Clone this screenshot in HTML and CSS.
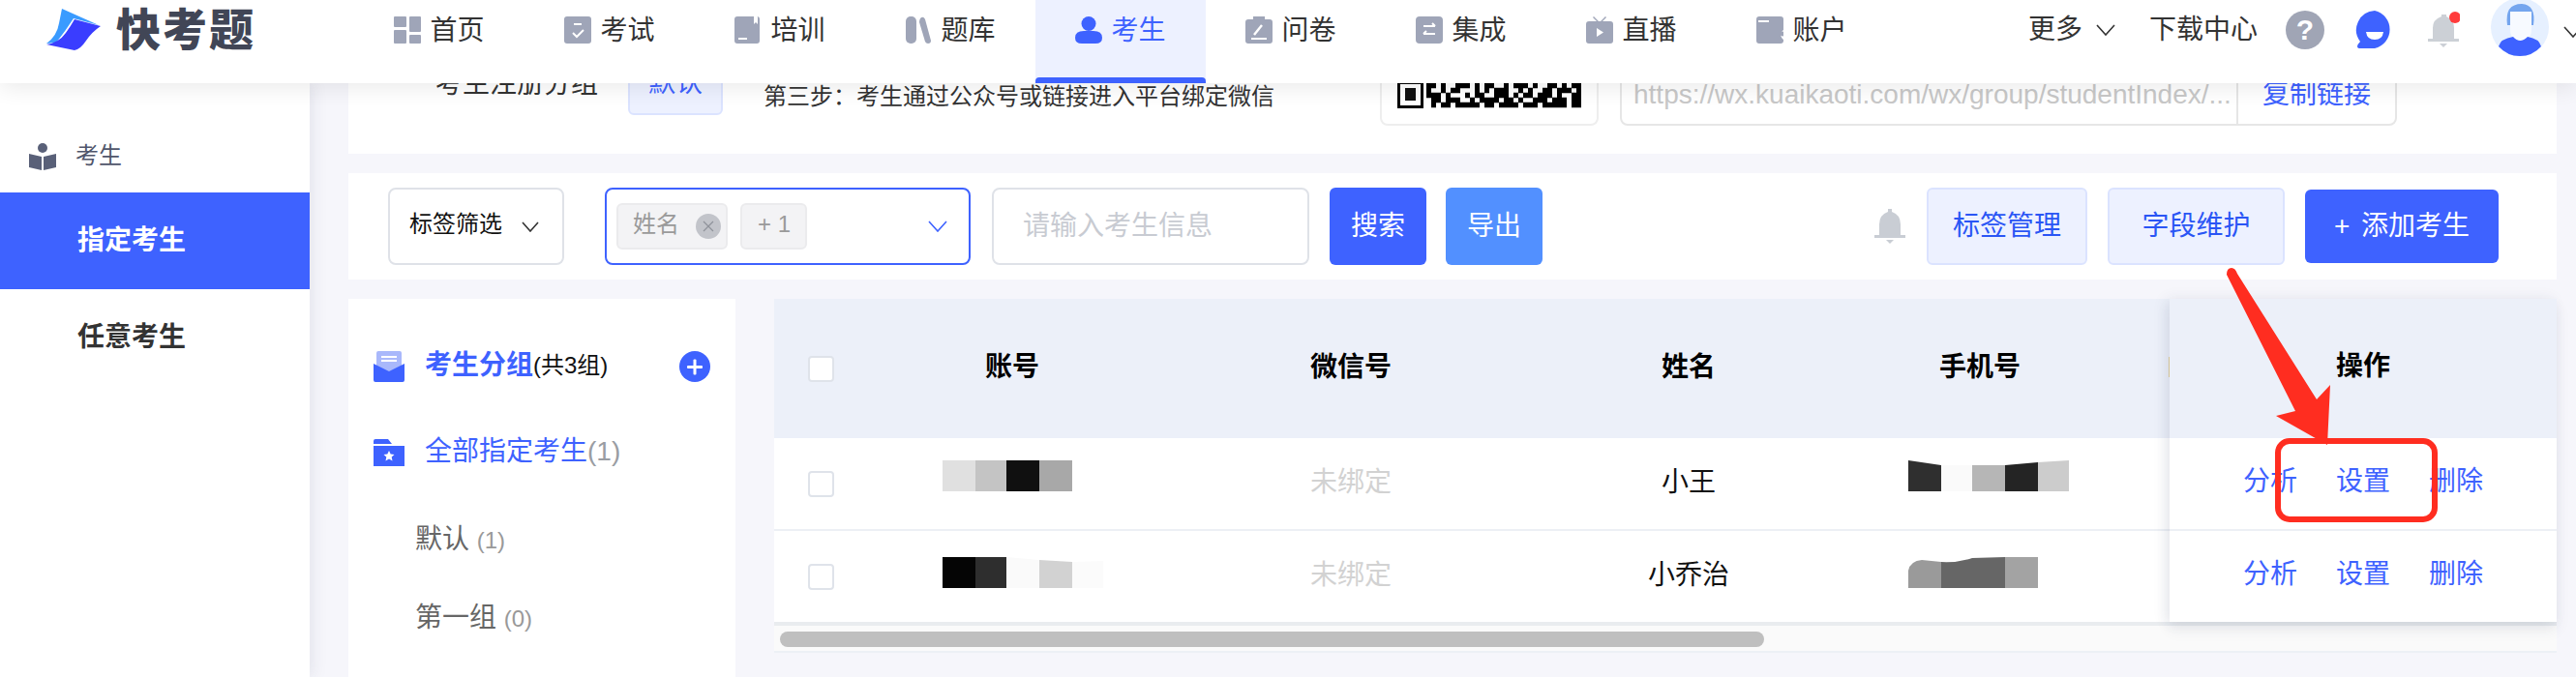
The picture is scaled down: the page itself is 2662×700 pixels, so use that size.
FILE: index.html
```html
<!DOCTYPE html>
<html lang="zh-CN">
<head>
<meta charset="utf-8">
<title>快考题 - 考生</title>
<link rel="stylesheet" href="styles.css">
</head>
<body>
<div class="stage">
  <header class="topbar">
    <div class="logo">
      <svg class="logo-mark" viewBox="0 0 58 44" width="58" height="44">
        <path fill="#3a9bff" d="M17 0 L55 17 L29 10 Q20 24 11 35 L1 36 Q12 28 14 15 Z"/>
        <path fill="#3a3dff" d="M30 11 L57 18 Q48 24 42 33 Q36 42 30 43 L1 37 Q14 35 21 25 Q26 18 30 11 Z"/>
      </svg>
      <span class="logo-text">快考题</span>
    </div>
    <nav class="nav">
      <a class="nav-item">
        <svg class="nav-icon" viewBox="0 0 28 28"><rect x="0" y="0" width="13" height="11" rx="1"/><rect x="0" y="14" width="13" height="14" rx="1"/><rect x="16" y="0" width="12" height="16" rx="1"/><rect x="16" y="19" width="12" height="9" rx="1"/></svg>
        <span>首页</span>
      </a>
      <a class="nav-item">
        <svg class="nav-icon" viewBox="0 0 28 28"><rect width="28" height="28" rx="3"/><path d="M10 8h8" stroke="#fff" stroke-width="2" fill="none"/><path d="M9 17l4 4 7-7" stroke="#fff" stroke-width="2" fill="none"/></svg>
        <span>考试</span>
      </a>
      <a class="nav-item">
        <svg class="nav-icon" viewBox="0 0 28 28"><path d="M3 0H20V8L22 6 24 8V0H23Q26 0 26 3V25Q26 28 23 28H3Q0 28 0 25V3Q0 0 3 0Z"/><path d="M4 23h9" stroke="#fff" stroke-width="2" fill="none"/></svg>
        <span>培训</span>
      </a>
      <a class="nav-item">
        <svg class="nav-icon" viewBox="0 0 28 28"><rect x="1" y="0" width="11" height="28" rx="5"/><path d="M16 2Q19-1 21 3L27 25Q27 28 24 28 22 28 21 26L15 6Q15 4 16 2Z"/></svg>
        <span>题库</span>
      </a>
      <a class="nav-item is-active">
        <svg class="nav-icon" viewBox="0 0 28 28"><ellipse cx="14" cy="7.5" rx="7.5" ry="7.5"/><path d="M7 28Q0 28 0 22 0 15 9 15H19Q28 15 28 22 28 28 21 28Z"/></svg>
        <span>考生</span>
      </a>
      <a class="nav-item">
        <svg class="nav-icon" viewBox="0 0 28 28"><path d="M3 3H8V0H20V3H25Q28 3 28 6V25Q28 28 25 28H3Q0 28 0 25V6Q0 3 3 3Z"/><path d="M17 9L9 19" stroke="#fff" stroke-width="2.4" fill="none"/><path d="M6 23h16" stroke="#fff" stroke-width="2" fill="none"/></svg>
        <span>问卷</span>
      </a>
      <a class="nav-item">
        <svg class="nav-icon" viewBox="0 0 28 28"><rect width="28" height="28" rx="4"/><path d="M8 10h12M17 7l3 3M20 18H8M11 15l-3 3" stroke="#fff" stroke-width="2" fill="none"/></svg>
        <span>集成</span>
      </a>
      <a class="nav-item">
        <svg class="nav-icon" viewBox="0 0 28 28"><path d="M8 0l5 5h2l5-5 1 1-4 4H25Q28 5 28 8V25Q28 28 25 28H3Q0 28 0 25V8Q0 5 3 5H11L7 1Z"/><path d="M11 12l7 4.5-7 4.5Z" fill="#fff"/></svg>
        <span>直播</span>
      </a>
      <a class="nav-item">
        <svg class="nav-icon" viewBox="0 0 28 28"><path d="M3 0H25Q28 0 28 3V14A6 6 0 0 0 28 24V25Q28 28 25 28H3Q0 28 0 25V3Q0 0 3 0Z"/><path d="M2 5H13" stroke="#fff" stroke-width="2" fill="none"/><circle cx="27" cy="18" r="2.4"/></svg>
        <span>账户</span>
      </a>
    </nav>
    <div class="top-right">
      <span class="top-link">更多</span>
      <svg class="chev chev-more" viewBox="0 0 20 12" width="20" height="12"><path d="M1 1l9 10 9-10"/></svg>
      <span class="top-link top-download">下载中心</span>
      <span class="help">?</span>
      <svg class="chat" viewBox="0 0 40 40" width="40" height="40"><path fill="#3e62ff" d="M20 0A20 20 0 0 1 20 39H5Q2 39 2 37 2 35 5 32A20 20 0 0 1 20 0Z"/><path fill="#fff" d="M11 22H29Q28 30 20 30 12 30 11 22Z"/></svg>
      <svg class="bell-top" viewBox="0 0 34 38" width="34" height="38"><path fill="#ccd0d6" d="M15 3h5v2q8 3 8 12V28h5v3H1V28H6V17Q6 8 15 5Z"/><path fill="#ccd0d6" d="M13 33H21L17 37Z"/><circle cx="29" cy="6" r="6" fill="#ff3b3b"/></svg>
      <svg class="avatar" viewBox="0 0 60 60" width="60" height="60"><circle cx="30" cy="30" r="30" fill="#e6f0ff"/><path fill="#74a5ee" d="M17 28Q14 6 32 6 47 7 44 28L42 28V18H20V28Z"/><path fill="#dbe4ee" d="M22 34H38V48H22Z"/><path fill="#f7faff" d="M20 14H42V32Q42 44 31 44 20 44 20 32Z"/><path fill="#3e62ff" d="M8 50Q10 42 23 40Q30 48 38 40 50 42 52 50 43 60 30 60 17 60 8 50Z"/></svg>
      <svg class="chev chev-user" viewBox="0 0 20 12" width="20" height="12"><path d="M1 1l9 10 9-10"/></svg>
    </div>
  </header>

  <div class="body">
    <aside class="sidebar">
      <div class="side-label">
        <svg viewBox="0 0 28 28" width="28" height="28"><circle cx="14" cy="5" r="5" fill="#596078"/><path fill="#596078" d="M0 11L13 14V28L0 25ZM28 11L15 14V28L28 25Z"/></svg>
        <span class="side-label-text">考生</span>
      </div>
      <a class="side-item is-active">指定考生</a>
      <a class="side-item">任意考生</a>
    </aside>

    <main class="main">
      <section class="card-top">
        <span class="reg-label">考生注册分组</span>
        <span class="reg-badge">默认</span>
        <span class="step-text">第三步：考生通过公众号或链接进入平台绑定微信</span>
        <div class="qr-box">
          <svg class="qr" viewBox="0 0 190 26" width="190" height="26">
            <rect x="0" y="-2" width="27" height="28" fill="#000"/><rect x="3" y="1" width="21" height="22" fill="#fff"/><rect x="8" y="5" width="11" height="13" fill="#111"/>
            <g stroke="#000" stroke-width="5.5" fill="none">
              <path d="M30 2.5H190" stroke-dasharray="10 5 5 10 15 5 5 5 10 10 5 5 15 5 5 10 10 5 5 5 15 5"/>
              <path d="M30 7.5H190" stroke-dasharray="5 10 5 5 10 15 5 5 5 5 15 10 5 5 5 10 10 5 15 5"/>
              <path d="M30 12.5H190" stroke-dasharray="15 5 5 15 5 5 10 10 15 5 5 5 10 5 15 5 5 10 10 5"/>
              <path d="M35 17.5H190" stroke-dasharray="10 5 15 10 5 5 20 5 10 5 5 10 15 5 15 5 10 5"/>
              <path d="M35 22.5H190" stroke-dasharray="5 5 10 5 25 5 10 5 20 5 15 5 25 5 15"/>
            </g>
          </svg>
        </div>
        <div class="link-box">
          <span class="link-url">https://wx.kuaikaoti.com/wx/group/studentIndex/...</span>
          <span class="link-copy">复制链接</span>
        </div>
      </section>

      <section class="card-filter">
        <div class="select-tag">
          <span class="raise">标签筛选</span>
          <svg class="chev" viewBox="0 0 18 11" width="18" height="11"><path d="M1 1l8 9 8-9"/></svg>
        </div>
        <div class="select-multi">
          <span class="chip"><span class="raise">姓名</span><i class="chip-x"><svg viewBox="0 0 12 12" width="12" height="12"><path d="M1 1l10 10M11 1L1 11"/></svg></i></span>
          <span class="chip chip-more"><span class="raise">+ 1</span></span>
          <svg class="chev chev-blue" viewBox="0 0 20 12" width="20" height="12"><path d="M1 1l9 10 9-10"/></svg>
        </div>
        <div class="search-input">请输入考生信息</div>
        <button class="btn btn-primary">搜索</button>
        <button class="btn btn-export">导出</button>
        <div class="filter-right">
          <svg viewBox="0 0 34 38" width="34" height="38"><path fill="#c9cdd4" d="M15 1h4v3q9 3 9 13V28h5v3H1V28H6V17Q6 7 15 4Z"/><path fill="#c9cdd4" d="M13 33H21L17 37Z"/></svg>
          <button class="btn btn-soft btn-tags">标签管理</button>
          <button class="btn btn-soft btn-fields">字段维护</button>
          <button class="btn btn-primary btn-add">+&nbsp;添加考生</button>
        </div>
      </section>

      <section class="content">
        <div class="groups">
          <div class="group-row">
            <svg viewBox="0 0 32 32" width="32" height="32"><rect x="3" y="0" width="26" height="22" rx="2" fill="#a9b8fb"/><path d="M8 6h16M8 10h16" stroke="#fff" stroke-width="2"/><path d="M0 13L16 21 32 13V30Q32 32 30 32H2Q0 32 0 30Z" fill="#3e62ff"/></svg>
            <span class="group-title">考生分组</span><span class="group-count">(共3组)</span>
            <span class="group-add"></span>
          </div>
          <div class="group-row group-all">
            <svg viewBox="0 0 32 28" width="32" height="28"><path fill="#3e62ff" d="M0 2Q0 0 2 0H15L19 5H0ZM0 7H32V28H0Z"/><path fill="#fff" d="M16 12l1.7 3.6 3.8.4-2.8 2.6.8 3.9-3.5-2-3.5 2 .8-3.9-2.8-2.6 3.8-.4Z"/></svg>
            <span class="group-link">全部指定考生<em>(1)</em></span>
          </div>
          <div class="group-sub group-sub-first">默认 <em>(1)</em></div>
          <div class="group-sub group-sub-second">第一组 <em>(0)</em></div>
        </div>

        <div class="table">
          <div class="table-main">
            <div class="table-cols">
              <div class="row row-head">
                <div class="cell cell-check"><i class="check"></i></div>
                <div class="cell">账号</div>
                <div class="cell">微信号</div>
                <div class="cell">姓名</div>
                <div class="cell">手机号</div>
                <div class="cell cell-clip">邮箱</div>
              </div>
              <div class="row">
                <div class="cell cell-check"><i class="check"></i></div>
                <div class="cell cell-mask mask-a">
                  <svg viewBox="0 0 134 32" width="134" height="32"><path fill="#e0e0e0" d="M0 0H34V32H0Z"/><path fill="#c4c4c4" d="M34 0H66V32H34Z"/><path fill="#101010" d="M66 0H100V32H66Z"/><path fill="#a8a8a8" d="M100 0H134V32H100Z"/></svg>
                </div>
                <div class="cell cell-muted">未绑定</div>
                <div class="cell">小王</div>
                <div class="cell cell-mask mask-a">
                  <svg viewBox="0 0 166 32" width="166" height="32"><path fill="#2f2f2f" d="M0 0L34 5V32H0Z"/><path fill="#fafafa" d="M34 5H66V32H34Z"/><path fill="#b6b6b6" d="M66 5H100V32H66Z"/><path fill="#242424" d="M100 5L134 2V32H100Z"/><path fill="#ccc" d="M134 2L166 0V32H134Z"/></svg>
                </div>
                <div class="cell"></div>
              </div>
              <div class="row">
                <div class="cell cell-check"><i class="check"></i></div>
                <div class="cell cell-mask mask-b">
                  <svg viewBox="0 0 166 32" width="166" height="32"><path fill="#050505" d="M0 0H34V32H0Z"/><path fill="#2e2e2e" d="M34 0H66V32H34Z"/><path fill="#fafafa" d="M66 0L100 3V32H66Z"/><path fill="#d2d2d2" d="M100 3L134 5V32H100Z"/><path fill="#fbfbfb" d="M134 5L166 4V32H134Z"/></svg>
                </div>
                <div class="cell cell-muted">未绑定</div>
                <div class="cell">小乔治</div>
                <div class="cell cell-mask mask-b">
                  <svg viewBox="0 0 134 32" width="134" height="32"><path fill="#9a9a9a" d="M0 32V14Q2 4 14 3L34 5V32Z"/><path fill="#666" d="M34 5Q50 6 66 1L100 0V32H34Z"/><path fill="#a3a3a3" d="M100 0H134V32H100Z"/></svg>
                </div>
                <div class="cell"></div>
              </div>
            </div>
            <div class="table-op">
              <div class="op-head">操作</div>
              <div class="op-row"><a>分析</a><a>设置</a><a>删除</a></div>
              <div class="op-row"><a>分析</a><a>设置</a><a>删除</a></div>
            </div>
          </div>
          <div class="scrollbar"><span class="scroll-thumb"></span></div>
        </div>
      </section>
    </main>
  </div>

  <svg class="annotation" viewBox="0 0 2662 700" width="2662" height="700">
    <rect x="2354" y="456" width="162" height="81" rx="12" fill="none" stroke="#ff2d20" stroke-width="6"/>
    <path fill="#ff2d20" d="M2301 284Q2301 277 2306 277 2310 277 2312 283L2394 413 2408 398 2405 460 2352 430 2372 425Z"/>
  </svg>
</div>
</body>
</html>
```

FILE: styles.css
```css
* { box-sizing: border-box; }

html, body {
  margin: 0;
  height: 700px;
  overflow: hidden;
  background: #f6f6fb;
}

body {
  font-family: "Liberation Sans", "Noto Sans CJK SC", sans-serif;
  font-size: 28px;
  color: #333;
}

.stage {
  position: relative;
  width: 2662px;
  height: 700px;
  overflow: hidden;
  display: flex;
  flex-direction: column;
}

/* top bar */
.topbar {
  position: relative;
  z-index: 10;
  flex: none;
  height: 86px;
  display: flex;
  background: #fff;
  box-shadow: 0 4px 22px rgba(0, 0, 0, .09);
}

.logo {
  width: 366px;
  flex: none;
  height: 62px;
  padding-left: 47px;
  display: flex;
  align-items: center;
  gap: 15px;
}

.logo-mark { flex: none; }

.logo-text {
  font-size: 46px;
  line-height: 46px;
  font-weight: 900;
  letter-spacing: 2px;
  color: #414656;
}

.nav { display: flex; }

.nav-item {
  position: relative;
  width: 176px;
  height: 86px;
  padding-bottom: 24px;
  display: flex;
  align-items: center;
  justify-content: center;
  gap: 9px;
  color: #333;
  line-height: 30px;
}

.nav-item span { padding-top: 2px; }

.nav-icon {
  width: 28px;
  height: 28px;
  flex: none;
  fill: #9fa5b8;
}

.nav-item.is-active {
  background: #edf1ff;
  color: #3e62ff;
}

.nav-item.is-active .nav-icon { fill: #3e62ff; }

.nav-item.is-active::after {
  content: "";
  position: absolute;
  left: 0;
  right: 0;
  bottom: 0;
  height: 6px;
  border-radius: 4px 4px 0 0;
  background: #3e62ff;
}

.top-right {
  position: relative;
  flex: 1;
  min-width: 0;
  height: 62px;
  padding-left: 146px;
  display: flex;
  align-items: center;
}

.top-link { flex: none; color: #333; line-height: 30px; }

.chev {
  flex: none;
  fill: none;
  stroke: #333;
  stroke-width: 1.6;
}

.chev-more { margin-left: 14px; }
.top-download { margin-left: 35px; }

.help {
  flex: none;
  width: 40px;
  height: 40px;
  margin-left: 29px;
  border-radius: 50%;
  background: #a0a5b5;
  color: #fff;
  font-size: 30px;
  font-weight: 700;
  line-height: 40px;
  text-align: center;
}

.chat { flex: none; margin-left: 32px; }
.bell-top { flex: none; margin-left: 34px; }
.avatar { flex: none; margin-left: 32px; margin-top: -6px; }
.chev-user { margin-left: 15px; margin-top: 4px; }

/* page body */
.body {
  flex: 1;
  min-height: 0;
  display: flex;
}

.sidebar {
  position: relative;
  z-index: 2;
  flex: none;
  width: 320px;
  padding-top: 46px;
  background: #fff;
  box-shadow: 2px 0 16px rgba(40, 50, 90, .1);
}

.side-label {
  height: 60px;
  margin-bottom: 7px;
  padding-left: 30px;
  display: flex;
  align-items: center;
  gap: 20px;
  font-size: 24px;
  color: #50566b;
}

.side-label-text { padding-bottom: 3px; line-height: 30px; }

.side-item {
  display: block;
  height: 100px;
  padding-left: 80px;
  line-height: 100px;
  font-weight: 700;
  color: #333;
}

.side-item.is-active {
  background: #3e62ff;
  color: #fff;
}

.main {
  flex: 1;
  min-width: 0;
  padding: 0 20px 0 40px;
  display: flex;
  flex-direction: column;
}

/* clipped top card */
.card-top {
  flex: none;
  height: 73px;
  overflow: hidden;
  padding-left: 90px;
  display: flex;
  align-items: flex-end;
  background: #fff;
}

.reg-label {
  flex: none;
  line-height: 40px;
  margin-bottom: 52px;
}

.reg-badge {
  flex: none;
  width: 98px;
  height: 64px;
  margin: 0 0 40px 31px;
  border: 2px solid #dbe3ff;
  border-radius: 6px;
  background: #edf1ff;
  color: #3e62ff;
  line-height: 58px;
  text-align: center;
}

.step-text {
  flex: none;
  margin: 0 0 45px 42px;
  font-size: 24px;
  line-height: 28px;
  color: #333;
}

.qr-box {
  flex: none;
  width: 226px;
  height: 80px;
  margin: 0 0 29px 109px;
  padding: 0 16px 16px;
  display: flex;
  align-items: flex-end;
  border: 2px solid #eee;
  border-radius: 8px;
}

.qr { flex: none; }

.link-box {
  flex: none;
  width: 803px;
  height: 64px;
  margin: 0 0 29px 22px;
  display: flex;
  align-items: center;
  border: 2px solid #e6e6e6;
  border-radius: 8px;
}

.link-url {
  flex: none;
  width: 635px;
  padding-left: 12px;
  white-space: nowrap;
  overflow: hidden;
  color: #c8c8c8;
  line-height: 40px;
}

.link-copy {
  flex: 1;
  height: 100%;
  border-left: 2px solid #e6e6e6;
  color: #3e62ff;
  line-height: 60px;
  text-align: center;
}

/* filter card */
.card-filter {
  flex: none;
  height: 110px;
  margin-top: 20px;
  padding: 0 60px 0 41px;
  display: flex;
  align-items: center;
  background: #fff;
}

.raise { padding-bottom: 4px; line-height: 30px; }

.select-tag {
  flex: none;
  width: 182px;
  height: 80px;
  padding: 0 24px 0 20px;
  display: flex;
  align-items: center;
  justify-content: space-between;
  border: 2px solid #dfe2e8;
  border-radius: 8px;
  font-size: 24px;
  color: #111;
}

.select-multi {
  flex: none;
  width: 378px;
  height: 80px;
  margin-left: 42px;
  padding: 0 22px 0 10px;
  display: flex;
  align-items: center;
  gap: 13px;
  border: 2px solid #3e62ff;
  border-radius: 8px;
}

.chip {
  flex: none;
  width: 115px;
  height: 48px;
  padding-left: 15px;
  display: flex;
  align-items: center;
  gap: 17px;
  border: 2px solid #ebebed;
  border-radius: 6px;
  background: #f3f3f5;
  font-size: 24px;
  color: #9a9a9a;
}

.chip-more {
  width: 69px;
  gap: 0;
  padding-left: 16px;
}

.chip-x {
  flex: none;
  width: 26px;
  height: 26px;
  display: flex;
  align-items: center;
  justify-content: center;
  border-radius: 50%;
  background: #c2c4ca;
}

.chip-x svg { fill: none; stroke: #8f929a; stroke-width: 1.2; }

.chev-blue { margin-left: auto; stroke: #3e62ff; }

.search-input {
  flex: none;
  width: 328px;
  height: 80px;
  margin-left: 22px;
  padding-left: 30px;
  border: 2px solid #dfe2e8;
  border-radius: 8px;
  color: #c8cbd2;
  line-height: 76px;
}

.btn {
  flex: none;
  width: 100px;
  height: 80px;
  padding: 0;
  border: 0;
  border-radius: 6px;
  font: inherit;
  line-height: 1;
  color: #fff;
}

.btn-primary { background: #3e62ff; margin-left: 21px; }
.btn-export { background: #5290ff; margin-left: 20px; }

.filter-right {
  margin-left: auto;
  display: flex;
  align-items: center;
  gap: 21px;
}

.filter-right .btn { margin-left: 0; }

.btn-soft {
  border: 2px solid #dbe3ff;
  background: #edf1ff;
  color: #2a55f5;
}

.btn-tags { width: 166px; }
.btn-fields { width: 183px; }
.btn-add { width: 200px; height: 76px; word-spacing: 4px; }

/* lower content */
.content {
  flex: 1;
  min-height: 0;
  margin-top: 20px;
  display: flex;
  gap: 40px;
}

.groups {
  flex: none;
  width: 400px;
  padding-top: 50px;
  background: #fff;
}

.group-row {
  height: 40px;
  padding: 0 26px;
  display: flex;
  align-items: center;
  gap: 21px;
}

.group-all { margin-top: 49px; }

.group-title,
.group-count,
.group-link { padding-bottom: 3px; line-height: 34px; }

.group-title {
  font-weight: 700;
  color: #3e62ff;
  white-space: nowrap;
}

.group-count {
  margin-left: -21px;
  font-size: 24px;
  color: #111;
  white-space: nowrap;
}

.group-add {
  position: relative;
  flex: none;
  width: 32px;
  height: 32px;
  margin-left: auto;
  border-radius: 50%;
  background: #3e62ff;
}

.group-add::before,
.group-add::after {
  content: "";
  position: absolute;
  left: 8px;
  top: 14.5px;
  width: 16px;
  height: 3px;
  border-radius: 1px;
  background: #fff;
}

.group-add::after { transform: rotate(90deg); }

.group-link { color: #3e62ff; white-space: nowrap; }

em { font-style: normal; color: #999; }

.group-link em { color: #9a9da3; }

.group-sub {
  height: 40px;
  padding-left: 69px;
  line-height: 40px;
  color: #666;
}

.group-sub em { font-size: 24px; }

.group-sub-first { margin-top: 50px; }
.group-sub-second { margin-top: 41px; }

/* table */
.table {
  flex: 1;
  min-width: 0;
}

.table-main {
  display: flex;
  background: #fff;
  border-bottom: 4px solid #e9ecef;
}

.table-cols {
  flex: none;
  width: 1442px;
}

.row {
  display: grid;
  grid-template-columns: 96px 300px 400px 298px 304px 44px;
  height: 96px;
  border-bottom: 2px solid #edf0f5;
  align-items: center;
  text-align: center;
  color: #111;
}

.row:last-child { height: 94px; border-bottom: 0; }

.row-head {
  height: 144px;
  border-bottom: 0;
  background: #ecf0f9;
  font-weight: 700;
  color: #000;
}

.cell { min-width: 0; line-height: 40px; padding-bottom: 3px; }

.cell-check {
  padding: 0 0 0 35px;
  display: flex;
  align-items: center;
}

.check {
  display: block;
  width: 27px;
  height: 27px;
  border: 2px solid #dfe3ea;
  border-radius: 4px;
  background: #fff;
}

.cell-mask {
  align-self: start;
  padding: 0 0 0 78px;
  display: flex;
  line-height: 0;
}

.mask-a { padding-top: 23px; }
.mask-b { padding-top: 27px; }

.cell-muted { color: #d2d2d2; }

.cell-clip {
  padding-left: 42px;
  overflow: hidden;
  white-space: nowrap;
  text-align: left;
}

.table-op {
  position: relative;
  flex: none;
  width: 400px;
  background: #fff;
  box-shadow: -4px 0 14px rgba(40, 50, 90, .08), 0 8px 14px rgba(40, 50, 90, .08);
}

.op-head {
  height: 144px;
  background: #ecf0f9;
  font-weight: 700;
  color: #000;
  line-height: 140px;
  text-align: center;
}

.op-row {
  height: 96px;
  padding-bottom: 5px;
  display: flex;
  align-items: center;
  justify-content: center;
  gap: 40px;
  border-bottom: 2px solid #edf0f5;
  color: #3e62ff;
  line-height: 40px;
}

.op-row:last-child { height: 94px; border-bottom: 0; }

.scrollbar {
  height: 28px;
  padding: 6px 0 0 6px;
  background: #fafafa;
  border-bottom: 2px solid #edf0f5;
}

.scroll-thumb {
  display: block;
  width: 1017px;
  height: 16px;
  border-radius: 8px;
  background: #bfbfbf;
}

/* red review markup */
.annotation {
  position: absolute;
  left: 0;
  top: 0;
  z-index: 20;
  pointer-events: none;
}
```
